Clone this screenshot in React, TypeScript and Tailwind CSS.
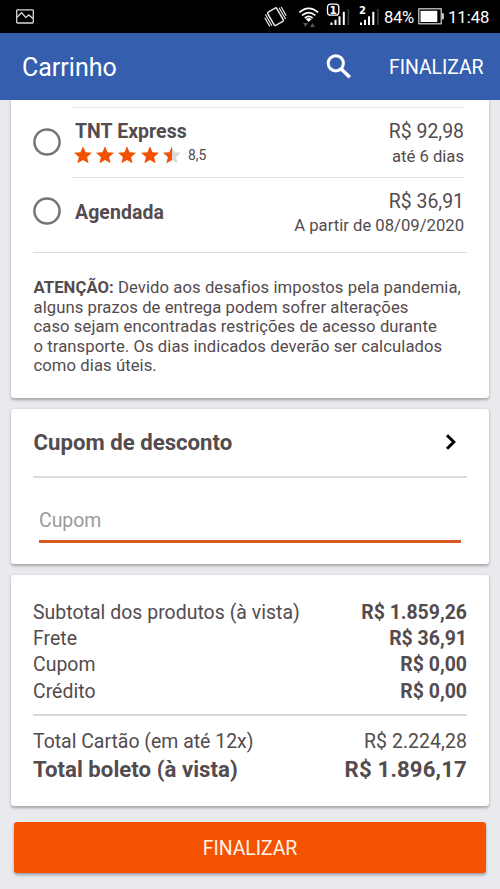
import React from "react";

const STAR = "M12 17.27L18.18 21l-1.64-7.03L22 9.24l-7.19-.61L12 2 9.19 8.63 2 9.24l5.46 4.73L5.82 21z";

function Star({ half = false }: { half?: boolean }) {
  return (
    <svg className="h-[17.5px] w-[18px] shrink-0" viewBox="2 2 20 19">
      {half && <path d={STAR} fill="#d9d9d9" />}
      <path d={STAR} fill="#f25003" style={half ? { clipPath: "inset(0 50% 0 0)" } : undefined} />
    </svg>
  );
}

function Radio() {
  return (
    <svg className="size-7 shrink-0" viewBox="0 0 28 28">
      <circle cx="14" cy="14" r="12.6" fill="none" stroke="#757575" strokeWidth="2.5" />
    </svg>
  );
}

function Signal() {
  return (
    <g>
      <rect x="0" y="12.5" width="2" height="2.5" fill="#fff" />
      <rect x="4" y="9.8" width="2" height="5.2" fill="#fff" />
      <rect x="8" y="6.3" width="2" height="8.7" fill="#fff" />
      <rect x="12.3" y="1.8" width="2" height="13.2" fill="#fff" />
      <rect x="17" y="-1" width="1.7" height="16" fill="#3a3a3a" />
    </g>
  );
}

function StatusBar() {
  return (
    <div className="flex h-[33px] items-center bg-black text-white">
      <svg className="ml-4 h-[15px] w-[18px]" viewBox="0 0 18 15" fill="none" stroke="#d8d8d8" strokeWidth="1.3">
        <rect x="0.7" y="0.8" width="16.6" height="13.2" rx="0.8" />
        <path d="M1 8.3 L5.6 3.8 L9.8 8.4 L12.8 5.9 L17 9.6" />
      </svg>
      <svg className="ml-[230px] h-[33px] w-[116px] shrink-0" viewBox="264 0 116 33">
        <g fill="none" stroke="#e8e8e8" strokeWidth="1.2" transform="translate(275.5 16.7) rotate(-30)">
          <rect x="-5.2" y="-7.6" width="10.4" height="15.2" rx="1.2" strokeWidth="1.5" />
          <path d="M-7.6 -7 V6 M-9.8 -4.5 V5.5 M7.6 -6 V7 M9.8 -5.5 V4.5" />
        </g>
        <g fill="none" stroke="#fff" strokeWidth="1.7">
          <path d="M299.3 12.4 Q308.7 4.2 318.1 12.4" />
          <path d="M302 15.4 Q308.7 9.7 315.4 15.4" />
          <path d="M304.8 18 Q308.7 14.8 312.6 18" />
        </g>
        <path d="M305.7 19 Q308.7 17.2 311.7 19 L308.7 22 Z" fill="#fff" />
        <path d="M303 23 h5 l-2.5 4 Z M310 27 h5 l-2.5 -4 Z" fill="#555" />
        <g transform="translate(330.5 10)"><Signal /></g>
        <rect x="327.5" y="4.2" width="11.3" height="11" rx="3" fill="#000" stroke="#fff" strokeWidth="1.3" />
        <text x="333.2" y="13.6" textAnchor="middle" fontSize="10.5" fontWeight="700" fontFamily="'DejaVu Sans', sans-serif" fill="#fff">1</text>
        <g transform="translate(360 10)"><Signal /></g>
        <text x="362.5" y="13.6" textAnchor="middle" fontSize="10" fontWeight="700" fontFamily="'DejaVu Sans', sans-serif" fill="#fff">2</text>
      </svg>
      <span className="ml-[4px] w-[34px] whitespace-nowrap pt-[1px] text-[16.67px] leading-[33px] tracking-[-0.4px]">84%</span>
      <svg className="h-[17px] w-[26px] shrink-0" viewBox="0 0 26 17">
        <rect x="0.8" y="0.8" width="22.4" height="15" fill="none" stroke="#d8d8d8" strokeWidth="1.2" />
        <rect x="2.5" y="2.8" width="16.8" height="11.2" fill="#fff" />
        <rect x="24" y="5.3" width="1.8" height="6" fill="#d8d8d8" />
      </svg>
      <span className="ml-[4px] whitespace-nowrap pt-[1px] text-[16.67px] leading-[33px]">11:48</span>
    </div>
  );
}

function SummaryRow({ label, value }: { label: string; value: string }) {
  return (
    <div className="flex h-[26.4px] items-center justify-between whitespace-nowrap text-[19.44px]">
      <span className="tracking-[0.03px]">{label}</span>
      <span className="font-bold">{value}</span>
    </div>
  );
}

const CARD = "mx-[11px] rounded-[3px] bg-white shadow-[0_1.5px_3px_rgba(0,0,0,0.3)]";

export default function App() {
  return (
    <div className="flex h-[889px] w-[500px] flex-col overflow-hidden bg-[#e9eaee] font-['Roboto',sans-serif] text-[#544b4e]">
      <StatusBar />
      <header className="flex h-[67px] items-center bg-[#355fae] pl-[22px] text-white">
        <h1 className="w-[304px] pt-[3px] text-[25px] leading-[30px]">Carrinho</h1>
        <svg className="h-[25px] w-[26px]" viewBox="0 0 26 25" fill="none" stroke="#fff">
          <circle cx="9.8" cy="9.3" r="7.6" strokeWidth="3" />
          <path d="M15 14.7 L23.8 23.2" strokeWidth="3.6" />
        </svg>
        <span className="ml-[37px] whitespace-nowrap pt-[2px] text-[19.44px] leading-[24px] tracking-[-0.05px]">FINALIZAR</span>
      </header>

      <section className={`${CARD} h-[298px] rounded-t-none pl-[22px] pr-[22px]`}>
        <div className="ml-[39px] mr-[3px] mt-[7px] h-px bg-[#e7e7e4]" />
        <div className="mr-[3px] flex h-[68.5px] whitespace-nowrap">
          <div className="pt-[20px]"><Radio /></div>
          <div className="ml-[14px] pt-[12px]">
            <div className="text-[19.44px] font-bold leading-6 tracking-[0.07px]">TNT Express</div>
            <div className="-ml-px flex h-[22px] items-center gap-[4.2px]">
              <Star /><Star /><Star /><Star /><Star half />
              <span className="ml-[3px] text-[13.9px] leading-5">8,5</span>
            </div>
          </div>
          <div className="ml-auto pt-[12px] text-right">
            <div className="text-[19.44px] leading-6">R$ 92,98</div>
            <div className="pt-px text-[16.67px] leading-6">até 6 dias</div>
          </div>
        </div>
        <div className="ml-[39px] mr-[3px] h-px bg-[#e3e3e3]" />
        <div className="mr-[3px] flex h-[74px] whitespace-nowrap">
          <div className="pt-[19.5px]"><Radio /></div>
          <div className="ml-[14px] pt-[23px] text-[19.44px] font-bold leading-6 tracking-[0.1px]">Agendada</div>
          <div className="ml-auto pt-[12px] text-right">
            <div className="text-[19.44px] leading-6">R$ 36,91</div>
            <div className="text-[16.67px] leading-6">A partir de 08/09/2020</div>
          </div>
        </div>
        <div className="h-[1.5px] bg-[#dcdcdc]" />
        <p className="whitespace-nowrap pl-[0.5px] pt-[25px] text-[16.67px] leading-[19.5px] tracking-[0.07px]">
          <b>ATENÇÃO:</b> Devido aos desafios impostos pela pandemia,<br />
          alguns prazos de entrega podem sofrer alterações<br />
          caso sejam encontradas restrições de acesso durante<br />
          o transporte. Os dias indicados deverão ser calculados<br />
          como dias úteis.
        </p>
      </section>

      <section className={`${CARD} mt-[11px] h-[155px] px-[22px]`}>
        <div className="flex h-[67px] items-center justify-between">
          <h2 className="whitespace-nowrap pl-[0.5px] pt-px text-[22.2px] font-bold">Cupom de desconto</h2>
          <svg className="mr-[10px] h-[17px] w-[12px]" viewBox="0 0 12 17" fill="none" stroke="#000" strokeWidth="3">
            <path d="M2 1.3 L8.8 8 L2 14.7" />
          </svg>
        </div>
        <div className="h-[1.5px] bg-[#dcdcdc]" />
        <div className="mx-[6px] mt-[31.5px] h-[34px] border-b-[3px] border-[#d65a1e] text-[19.44px] leading-6 text-[#9b9b9b]">Cupom</div>
      </section>

      <section className={`${CARD} mt-[11px] h-[231px] px-[22px] pt-[24px]`}>
        <SummaryRow label="Subtotal dos produtos (à vista)" value="R$ 1.859,26" />
        <SummaryRow label="Frete" value="R$ 36,91" />
        <SummaryRow label="Cupom" value="R$ 0,00" />
        <SummaryRow label="Crédito" value="R$ 0,00" />
        <div className="mt-[9.9px] h-[1.5px] bg-[#d8d8d8]" />
        <div className="mt-[12px] flex h-[27px] items-center justify-between whitespace-nowrap text-[19.44px]">
          <span>Total Cartão (em até 12x)</span>
          <span className="tracking-[0.07px]">R$ 2.224,28</span>
        </div>
        <div className="flex h-[29px] items-center justify-between whitespace-nowrap text-[22.2px] font-bold">
          <span className="tracking-[0.03px]">Total boleto (à vista)</span>
          <span className="tracking-[0.15px]">R$ 1.896,17</span>
        </div>
      </section>

      <button className="mx-[14px] mt-[16px] h-[51px] rounded-[3px] bg-[#f45200] pt-[2px] text-[19.44px] tracking-[-0.05px] text-[#fff3e8] shadow-[0_2px_3px_rgba(0,0,0,0.32)]">
        FINALIZAR
      </button>
    </div>
  );
}
